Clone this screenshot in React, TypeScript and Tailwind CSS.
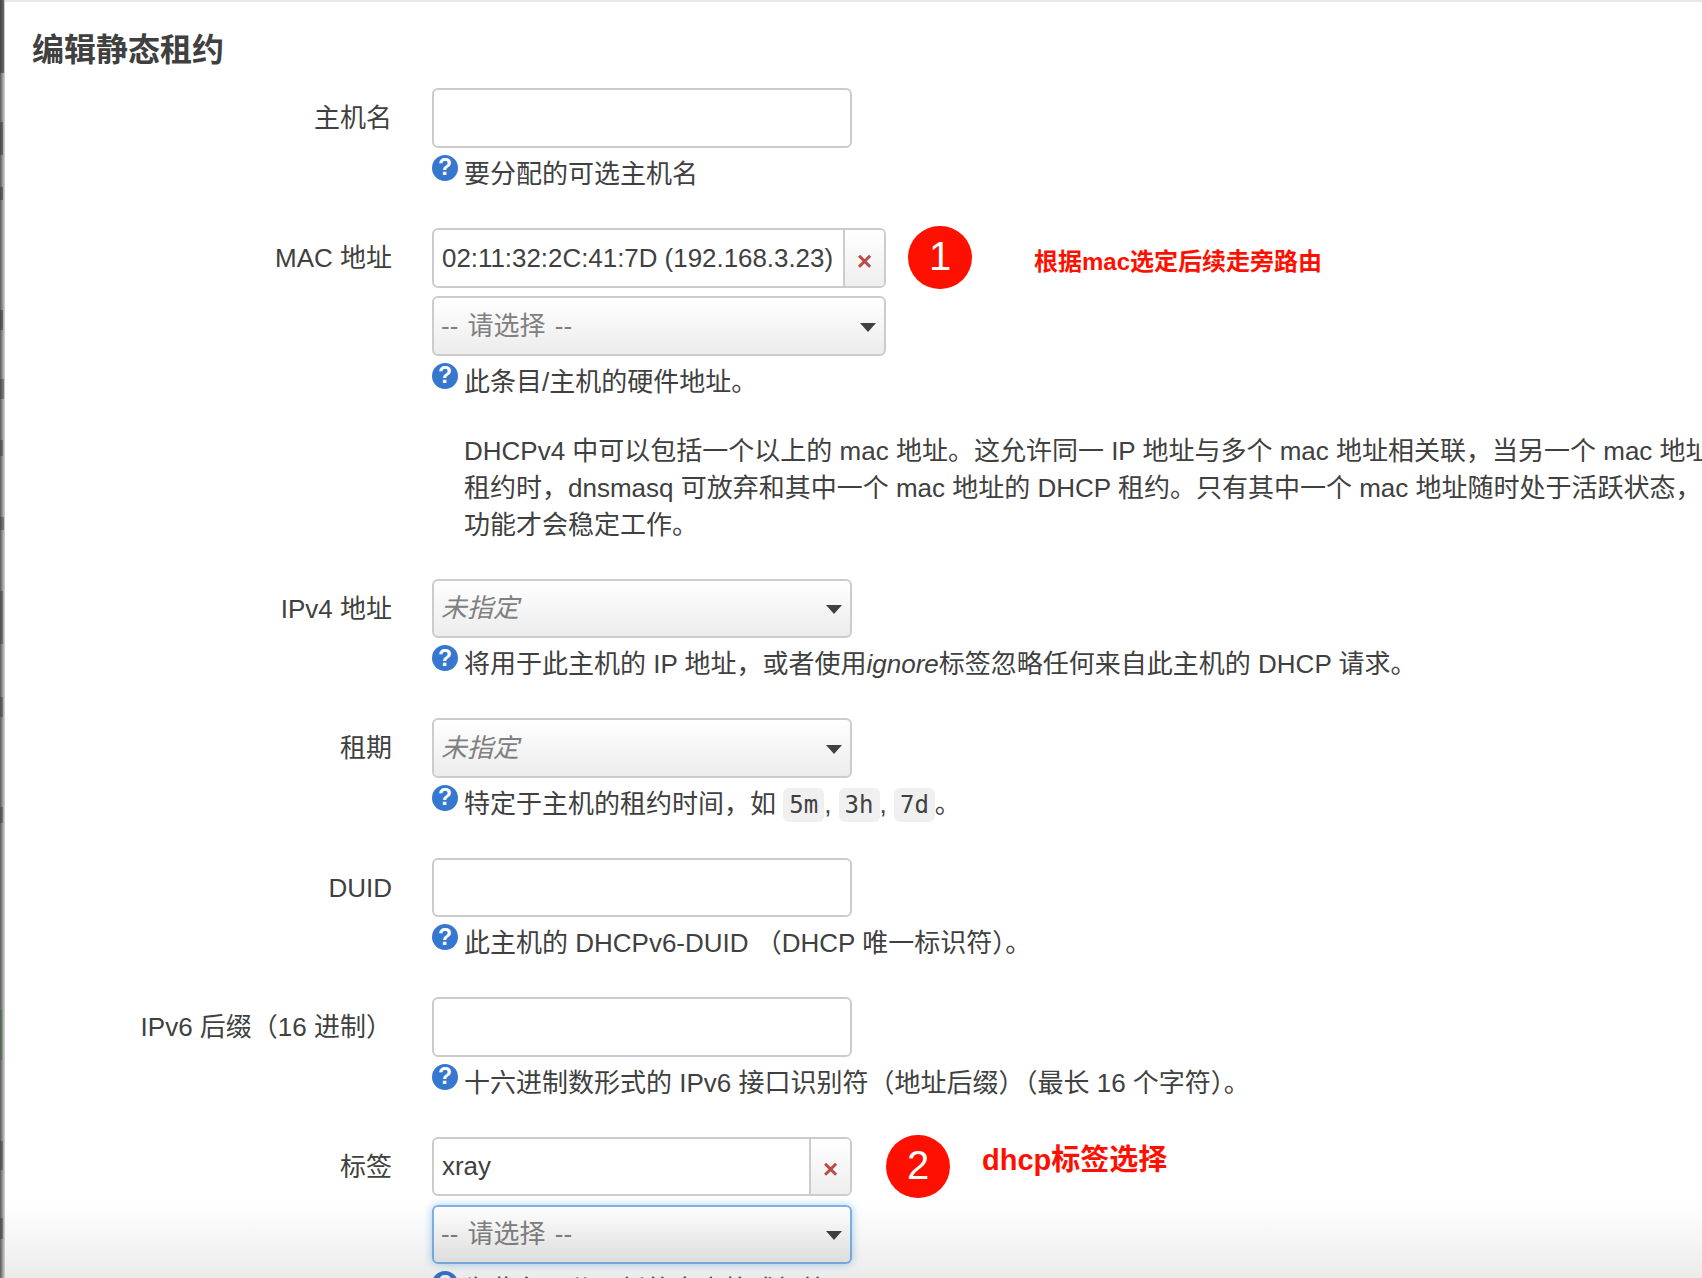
import type { ReactNode } from "react";

const font =
  "font-['Liberation_Sans','Noto_Sans_CJK_SC',sans-serif]";

function HelpIcon() {
  return (
    <div className="flex h-[26px] w-[26px] shrink-0 items-center justify-center rounded-full bg-[#3678d0] text-[23px] font-bold leading-none text-white">
      ?
    </div>
  );
}

function Help({ children }: { children: ReactNode }) {
  return (
    <div className="mt-[7px] flex h-[37px] gap-[6px] whitespace-nowrap text-[26px] leading-[37px]">
      <HelpIcon />
      <div className="pt-[1px]">{children}</div>
    </div>
  );
}

function Row({ label, children }: { label: string; children: ReactNode }) {
  return (
    <div className="flex">
      <div className="h-[59.5px] w-[387px] shrink-0 whitespace-nowrap text-right text-[26px] leading-[61px]">
        {label}
      </div>
      <div className="ml-[40px] min-w-0 flex-1">{children}</div>
    </div>
  );
}

function TextBox() {
  return (
    <div className="h-[59.5px] w-[420px] rounded-[6px] border-2 border-[#cccccc] bg-white" />
  );
}

function Arrow() {
  return (
    <svg width="16" height="9" viewBox="0 0 16 9" className="mt-[3px] shrink-0">
      <polygon points="0,0 16,0 8,9" fill="#404040" />
    </svg>
  );
}

function Select({
  text,
  width,
  italic,
  focused,
}: {
  text: string;
  width: string;
  italic?: boolean;
  focused?: boolean;
}) {
  return (
    <div
      className={`flex h-[59.5px] items-center justify-between rounded-[6px] border-2 bg-gradient-to-b from-white to-[#ececec] pl-[7px] pr-[8px] text-[26px] text-[#808080] ${width} ${
        focused
          ? "border-[#7db1e6] shadow-[0_0_8px_rgba(102,175,233,0.6)]"
          : "border-[#cccccc]"
      } ${italic ? "italic" : "[word-spacing:2px]"}`}
    >
      <span className="pt-[1px]">{text}</span>
      <Arrow />
    </div>
  );
}

function Chosen({ text, width }: { text: string; width: string }) {
  return (
    <div
      className={`flex h-[59.5px] items-stretch overflow-hidden rounded-[6px] border-2 border-[#cccccc] bg-white text-[25.9px] ${width}`}
    >
      <div className="flex flex-1 items-center whitespace-nowrap pl-[8px] pt-[1px]">
        {text}
      </div>
      <div className="flex w-[41px] items-center justify-center border-l-2 border-[#cccccc] bg-gradient-to-b from-white to-[#eeeeee] pt-[6px] text-[26px] font-bold leading-none text-[#b94a48]">
        ×
      </div>
    </div>
  );
}

function Badge({ n }: { n: number }) {
  return (
    <div className="flex h-[63px] w-[64px] shrink-0 items-center justify-center rounded-full bg-[#fe1000] pb-[2px] text-[40px] leading-none text-white">
      {n}
    </div>
  );
}

function Code({ children }: { children: string }) {
  return (
    <code className="mt-[2px] inline-block h-[34px] rounded-[6px] bg-[#f0f0f0] px-[6px] align-top font-['DejaVu_Sans_Mono',monospace] text-[24px] leading-[35px]">
      {children}
    </code>
  );
}

// blurred page behind the dialog, seen along the left edge
function EdgeStrip() {
  return (
    <div className="flex h-full w-[5px] shrink-0 flex-col bg-gradient-to-r from-[#5a5a5a] to-[#d8d8d8]">
      <div className="h-[73px] w-[4px] bg-[#333333]/60" />
      <div className="mt-[49px] h-[33px] w-[3px] bg-[#333333]/50" />
      <div className="mt-[32px] h-[13px] w-[3px] bg-[#333333]/50" />
      <div className="mt-[110px] h-[20px] w-[3px] bg-[#333333]/50" />
      <div className="mt-[49px] h-[20px] w-[4px] bg-[#333333]/40" />
      <div className="mt-[41px] h-[16px] w-[3px] bg-[#333333]/40" />
      <div className="mt-[61px] h-[13px] w-[4px] bg-[#333333]/40" />
      <div className="mt-[61px] h-[53px] w-[3px] bg-[#333333]/40" />
      <div className="mt-[53px] h-[20px] w-[3px] bg-[#333333]/40" />
      <div className="mt-[90px] h-[16px] w-[3px] bg-[#333333]/40" />
      <div className="mt-[187px] h-[50px] w-[2px] bg-[#3f6b4a]/60" />
      <div className="mt-[81px] h-[29px] w-[3px] bg-[#333333]/40" />
      <div className="mt-[48px] h-[21px] w-[3px] bg-[#333333]/40" />
    </div>
  );
}

export default function App() {
  return (
    <div
      className={`relative flex h-[1278px] w-[1702px] overflow-hidden bg-white text-[#404040] ${font}`}
    >
      <EdgeStrip />

      <div className="min-w-0 flex-1 border-t-2 border-[#e8e8e8]">
        <h3 className="h-[86px] pl-[27px] pt-[27px] text-[32px] font-bold leading-[42px]">
          编辑静态租约
        </h3>

        <div className="flex flex-col gap-[36px]">
          <div className="pb-[0.5px]">
            <Row label="主机名">
              <TextBox />
              <Help>要分配的可选主机名</Help>
            </Row>
          </div>

          <Row label="MAC 地址">
            <div className="flex h-[59.5px] items-center">
              <Chosen text="02:11:32:2C:41:7D (192.168.3.23)" width="w-[454px]" />
              <div className="-mt-[1px] ml-[22px]">
                <Badge n={1} />
              </div>
              <div className="ml-[62px] mt-[8px] whitespace-nowrap text-[24px] font-bold text-[#fe1000]">
                根据mac选定后续走旁路由
              </div>
            </div>
            <div className="mt-[8.5px]">
              <Select text="-- 请选择 --" width="w-[454px]" />
            </div>
            <Help>此条目/主机的硬件地址。</Help>
            <div className="-mb-[1px] mt-[33px] whitespace-nowrap pl-[32px] text-[26px] leading-[37px]">
              <div>
                DHCPv4 中可以包括一个以上的 mac 地址。这允许同一 IP 地址与多个 mac 地址相关联，当另一个 mac 地址请求
              </div>
              <div>
                租约时，dnsmasq 可放弃和其中一个 mac 地址的 DHCP 租约。只有其中一个 mac 地址随时处于活跃状态，此
              </div>
              <div>功能才会稳定工作。</div>
            </div>
          </Row>

          <Row label="IPv4 地址">
            <Select text="未指定" width="w-[420px]" italic />
            <Help>
              将用于此主机的 IP 地址，或者使用<em>ignore</em>标签忽略任何来自此主机的 DHCP 请求。
            </Help>
          </Row>

          <Row label="租期">
            <Select text="未指定" width="w-[420px]" italic />
            <Help>
              特定于主机的租约时间，如 <Code>5m</Code>, <Code>3h</Code>, <Code>7d</Code>。
            </Help>
          </Row>

          <Row label="DUID">
            <TextBox />
            <Help>此主机的 DHCPv6-DUID （DHCP 唯一标识符）。</Help>
          </Row>

          <Row label="IPv6 后缀（16 进制）">
            <TextBox />
            <Help>十六进制数形式的 IPv6 接口识别符（地址后缀）（最长 16 个字符）。</Help>
          </Row>

          <Row label="标签">
            <div className="flex h-[59.5px] items-center">
              <Chosen text="xray" width="w-[420px]" />
              <div className="ml-[34px]">
                <Badge n={2} />
              </div>
              <div className="mb-[12px] ml-[32px] whitespace-nowrap text-[29px] font-bold text-[#fe1000]">
                dhcp标签选择
              </div>
            </div>
            <div className="mt-[8.5px]">
              <Select text="-- 请选择 --" width="w-[420px]" focused />
            </div>
            <Help>为此条目分配新的自由格式标签。</Help>
          </Row>
        </div>
      </div>

      {/* fade at the bottom of the screenshot */}
      <div className="pointer-events-none absolute bottom-0 left-[5px] right-0 h-[75px] bg-gradient-to-b from-black/0 to-black/[0.08]" />
    </div>
  );
}
